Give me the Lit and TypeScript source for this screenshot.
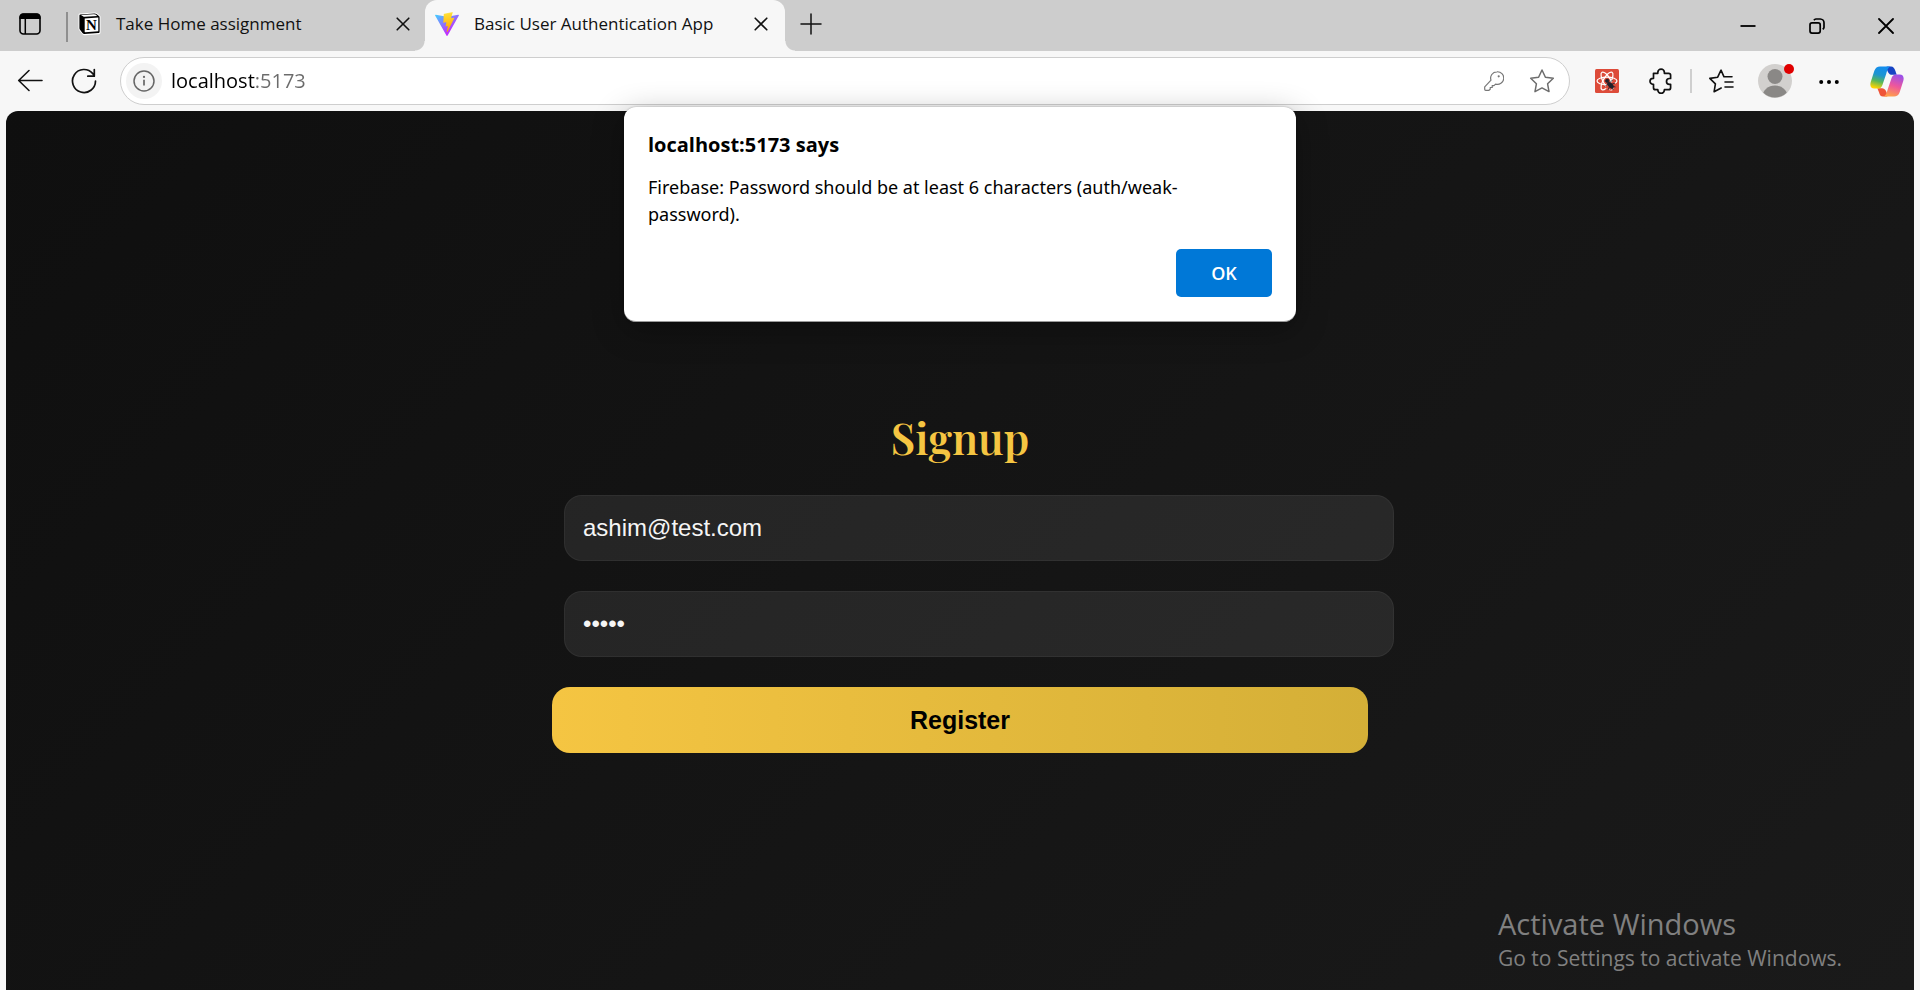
import { LitElement, html, css, svg } from "lit";
import { customElement, state } from "lit/decorators.js";

const closeIcon = svg`<svg width="14" height="14" viewBox="0 0 14 14" fill="none" stroke="#111" stroke-width="1.6" stroke-linecap="round"><path d="M1.2 1.2 12.8 12.8M12.8 1.2 1.2 12.8"/></svg>`;

@customElement("browser-tabs")
class BrowserTabs extends LitElement {
  static styles = css`
    :host { display: block; }
    .strip { display: flex; height: 51px; background: #cdcdcd; font: 18px/24px "Open Sans", "Noto Sans", sans-serif; color: #111; }
    button { border: 0; padding: 0; background: none; display: flex; align-items: center; justify-content: center; }
    .actions { width: 66px; padding-right: 6px; box-sizing: border-box; height: 48px; }
    .rule { width: 2px; height: 30px; margin-top: 12px; background: #8f8f8f; }
    .tab { display: flex; align-items: center; box-sizing: border-box; width: 357px; height: 51px; padding: 0 10px 3px 10px; gap: 15px; position: relative; }
    .tab.active { width: 360px; padding-right: 12px; background: #f7f7f7; border-radius: 12px 12px 0 0; }
    .tab.active::before, .tab.active::after { content: ""; position: absolute; bottom: 0; width: 10px; height: 10px; }
    .tab.active::before { right: 100%; background: radial-gradient(circle at 0 0, transparent 9px, #f7f7f7 10px); }
    .tab.active::after { left: 100%; background: radial-gradient(circle at 100% 0, transparent 9px, #f7f7f7 10px); }
    .title { flex: 1; white-space: nowrap; font-size: 17px; }
    .close { width: 24px; height: 24px; }
    .add { width: 52px; height: 48px; }
    .window { display: flex; margin-left: auto; }
    .window button { width: 69px; height: 51px; }
  `;
  render() {
    return html`
      <div class="strip">
        <button class="actions" aria-label="Tab actions">
          <svg width="22" height="22" viewBox="0 0 22 22"><rect x="1" y="1" width="20" height="20" rx="3.5" fill="none" stroke="#000" stroke-width="1.6"/><path d="M.5 6V4A3.6 3.6 0 0 1 4 .4h14A3.6 3.6 0 0 1 21.500 4v2z"/><path d="M6.300 6v15" stroke="#000" stroke-width="1.500"/></svg>
        </button>
        <div class="rule"></div>
        <div class="tab">
          <svg width="23" height="24" viewBox="0 0 23 24"><path d="M2 1.500 16.500.5c1.300 0 1.800.2 2.600.8l2.400 2c.8.600 1 1 1 2v14.700c0 1.500-.5 2.200-2 2.300l-13.500.9c-1.200.1-1.900-.2-2.500-1L1.500 18.500C.8 17.600.5 16.900.5 16V3c0-.9.500-1.500 1.500-1.500z" fill="#fff"/><path d="M2.400 2.500 16.200 1.500c1-.1 1.500.1 2.200.6l2.500 1.900c.5.400.7.700.7 1.400v14c0 1-.4 1.600-1.500 1.700L6.600 22c-.9.100-1.400-.1-1.900-.7L2 17.800c-.4-.6-.6-1-.6-1.700V3.600c0-.6.300-1 1-1.100z" fill="#000"/><path d="M3 3.100 15.800 2.200l1.700.4 1.700 1.300L6.600 4.800c-.8 0-1.100-.1-1.600-.5zM6.700 6.400 20.300 5.500v13.800L7.200 20.300l-.5-.4z" fill="#fff"/><text x="13.500" y="18.200" text-anchor="middle" font-family="Liberation Serif" font-weight="700" font-size="15">N</text></svg>
          <span class="title">Take Home assignment</span>
          <button class="close" aria-label="Close tab">${closeIcon}</button>
        </div>
        <div class="tab active">
          <svg width="24" height="24" viewBox="0 0 256 257"><defs><linearGradient id="v1" x1="0" x2=".58" y1="0" y2=".79"><stop offset="0" stop-color="#41d1ff"/><stop offset="1" stop-color="#bd34fe"/></linearGradient><linearGradient id="v2" x1=".43" x2=".5" y1=".02" y2=".89"><stop offset="0" stop-color="#ffea83"/><stop offset=".083" stop-color="#ffdd35"/><stop offset="1" stop-color="#ffa800"/></linearGradient></defs><path fill="url(#v1)" d="M255.153 37.938L134.897 252.976c-2.483 4.440-8.862 4.466-11.382.048L.875 37.958c-2.746-4.814 1.371-10.646 6.827-9.670l120.385 21.517a6.537 6.537 0 0 0 2.322-.004l117.867-21.483c5.438-.991 9.574 4.796 6.877 9.620Z"/><path fill="url(#v2)" d="M185.432.063L96.440 17.501a3.268 3.268 0 0 0-2.634 3.014l-5.474 92.456a3.268 3.268 0 0 0 3.997 3.378l24.777-5.718c2.318-.535 4.413 1.507 3.936 3.838l-7.361 36.047c-.495 2.426 1.782 4.500 4.151 3.780l15.304-4.649c2.372-.720 4.652 1.360 4.150 3.788l-11.698 56.621c-.732 3.542 3.979 5.473 5.943 2.437l1.313-2.028l72.516-144.720c1.215-2.423-.880-5.186-3.540-4.672l-25.505 4.922c-2.396.462-4.435-1.770-3.759-4.114l16.646-57.705c.677-2.350-1.370-4.583-3.769-4.113Z"/></svg>
          <span class="title">Basic User Authentication App</span>
          <button class="close" aria-label="Close tab">${closeIcon}</button>
        </div>
        <button class="add" aria-label="New tab"><svg width="22" height="22" viewBox="0 0 22 22" stroke="#111" stroke-width="1.500" stroke-linecap="round"><path d="M11 1v20M1 11h20"/></svg></button>
        <div class="window">
          <button aria-label="Minimize"><svg width="16" height="16" viewBox="0 0 16 16"><path d="M.5 8h15" stroke="#000" stroke-width="1.800"/></svg></button>
          <button aria-label="Restore"><svg width="16" height="16" viewBox="0 0 16 16" fill="none" stroke="#000" stroke-width="1.700"><rect x="1" y="4.900" width="10.200" height="10.200" rx="2"/><path d="M4.900 2.200A3 3 0 0 1 7 1h4.300A3.800 3.800 0 0 1 15 4.800V9.300a3 3 0 0 1-1.300 2"/></svg></button>
          <button aria-label="Close"><svg width="16" height="16" viewBox="0 0 16 16" stroke="#000" stroke-width="1.800" stroke-linecap="round"><path d="M1 1 15 15M15 1 1 15"/></svg></button>
        </div>
      </div>`;
  }
}

@customElement("browser-toolbar")
class BrowserToolbar extends LitElement {
  static styles = css`
    :host { display: block; }
    .bar { display: flex; align-items: center; height: 60px; padding: 0 6px 0 3px; background: #f7f7f7; }
    button { border: 0; padding: 0; background: none; display: flex; align-items: center; justify-content: center; width: 54px; height: 48px; flex: none; position: relative; }
    .address { flex: 1; display: flex; align-items: center; box-sizing: border-box; height: 48px; margin: 0 10px 0 9px; padding: 0 3px 0 5px; border: 1px solid #cecece; border-radius: 24px; background: #fff; }
    .address .info { width: 36px; height: 36px; border-radius: 50%; background: #f3f3f3; }
    .address .inline { width: 48px; }
    .url { flex: 1; min-width: 0; height: 36px; margin-left: 9px; padding: 0; border: 0; outline: 0; font: 20px/36px "Open Sans", "Noto Sans", sans-serif; color: transparent; background: linear-gradient(90deg, #000 84px, #6b6b6b 84px); -webkit-background-clip: text; background-clip: text; caret-color: #000; }
    .rule { width: 2px; height: 24px; margin: 0 2px; background: #cfcfcf; }
    .copilot { margin-left: 4px; }
    .dot { position: absolute; top: 7px; right: 8px; width: 10px; height: 10px; border-radius: 50%; background: #e00000; }
  `;
  render() {
    return html`
      <div class="bar">
        <button aria-label="Back"><svg width="26" height="24" viewBox="0 0 26 24" fill="none" stroke="#111" stroke-width="1.600" stroke-linecap="round" stroke-linejoin="round"><path d="M25 11.500H2M12 1.500 1.700 11.500 12 21.500"/></svg></button>
        <button aria-label="Refresh"><svg width="26" height="26" viewBox="0 0 26 26" fill="none" stroke="#111" stroke-width="1.700" stroke-linecap="round" stroke-linejoin="round"><path d="M24.500 13A11.500 11.500 0 1 1 21.800 5.600L23.300 7.500M23.300 1.500V8.200H16.800"/></svg></button>
        <div class="address">
          <button class="info" aria-label="Site information"><svg width="22" height="22" viewBox="0 0 22 22"><circle cx="11" cy="11" r="10" fill="none" stroke="#666" stroke-width="1.500"/><path d="M11 9.800v5.700" stroke="#666" stroke-width="1.700"/><circle cx="11" cy="6.900" r="1.100" fill="#666"/></svg></button>
          <input class="url" type="text" aria-label="Address" spellcheck="false" .value=${"localhost:5173"} />
          <button class="inline" aria-label="Passwords"><svg width="20" height="20" viewBox="0 0 20 20" fill="none" stroke="#777" stroke-width="1.200" stroke-linejoin="round"><path d="M12.900.800a6.300 6.300 0 1 1-1.300 12.300L10 14.600H8.200v1.900H6.200v1.700l-1.200 1.100H1.700C1.100 19.300.700 19 .700 18.300V15.800L7 9.200A6.300 6.300 0 0 1 12.900.800z"/><circle cx="14.700" cy="5.300" r="1.100" fill="#777" stroke="none"/></svg></button>
          <button class="inline" aria-label="Add to favorites"><svg width="26" height="26" viewBox="0 0 26 26" fill="none" stroke="#6d6d6d" stroke-width="1.500" stroke-linejoin="round"><path d="M13 2l3.400 7.200 7.900 1.100-5.700 5.500 1.400 7.800-7-3.700-7 3.700 1.400-7.800-5.700-5.500 7.900-1.100z"/></svg></button>
        </div>
        <button aria-label="React developer tools"><svg width="24" height="24" viewBox="0 0 24 24" fill="none"><rect width="24" height="24" rx="1.500" fill="#dd4b39"/><g stroke="#fff" stroke-width="1.200"><ellipse cx="12" cy="12" rx="10" ry="3.800"/><ellipse cx="12" cy="12" rx="10" ry="3.800" transform="rotate(60 12 12)"/><ellipse cx="12" cy="12" rx="10" ry="3.800" transform="rotate(-60 12 12)"/></g><path d="M18 13l3 3-5 5-6-2 3-5z" fill="#dd4b39"/><g fill="#20202a" stroke="#20202a" stroke-width=".8"><ellipse cx="15.500" cy="16.300" rx="3.600" ry="2" transform="rotate(45 15.500 16.300)"/><circle cx="12.200" cy="11.800" r="1.700"/><path d="M15 13.500 17.500 11M17 15l3-.8M12.500 15 10 17.500M14.500 17.500 13 21M17.500 18.500 18 21M18.500 17.500l2 .5"/></g></svg></button>
        <button aria-label="Extensions"><svg width="24" height="26" viewBox="0 0 24 26" fill="none" stroke="#111" stroke-width="1.700" stroke-linejoin="round"><path d="M4.500 5.300h4.300V4.500a3.300 3.300 0 0 1 6.600 0v.8h4.200a2 2 0 0 1 2 2V10.500h-1.200a2.900 2.900 0 0 0 0 5.800h1.200v3.400a2 2 0 0 1-2 2H15.400v.400a3.300 3.300 0 0 1-6.600 0v-.400H6.500a2 2 0 0 1-2-2V16.300H4a3 3 0 0 1 0-6h.5z"/></svg></button>
        <div class="rule"></div>
        <button aria-label="Favorites"><svg width="26" height="26" viewBox="0 0 26 26" fill="none" stroke="#111" stroke-width="1.600" stroke-linecap="round" stroke-linejoin="round"><path d="M24 8.800H16L13 2.200 9.700 9.200 1.800 10.400 7.400 15.900 6.100 23.800 13.200 20"/><path d="M17 14h8M17 19h8"/></svg></button>
        <button aria-label="Profile"><svg width="34" height="34" viewBox="0 0 34 34"><defs><clipPath id="av"><circle cx="17" cy="17" r="16.500"/></clipPath></defs><circle cx="17" cy="17" r="17" fill="#d2d0ce"/><circle cx="17" cy="12.500" r="7.500" fill="#8a8886"/><ellipse cx="17" cy="32.500" rx="12.500" ry="11" fill="#8a8886" clip-path="url(#av)"/></svg><span class="dot"></span></button>
        <button aria-label="Settings and more"><svg width="20" height="6" viewBox="0 0 20 6"><circle cx="2.200" cy="4" r="2"/><circle cx="10" cy="4" r="2"/><circle cx="17.800" cy="4" r="2"/></svg></button>
        <button class="copilot" aria-label="Copilot"><svg width="34" height="31" viewBox="0 0 102 92"><defs><linearGradient id="c1" x1=".6" y1="0" x2=".35" y2="1"><stop offset="0" stop-color="#128df0"/><stop offset=".4" stop-color="#1f95cf"/><stop offset=".68" stop-color="#57b65a"/><stop offset="1" stop-color="#ffd400"/></linearGradient><linearGradient id="c2" x1=".65" y1="0" x2=".35" y2="1"><stop offset="0" stop-color="#9b50e8"/><stop offset=".5" stop-color="#ee579c"/><stop offset="1" stop-color="#ffa04a"/></linearGradient></defs><path d="M50 1H63C70 1 73 6 76 14L80 26H66C56 26 50 14 50 1z" fill="#1643c4"/><path d="M52 91H39C32 91 29 86 27 78L22 66H36C46 66 52 78 52 91z" fill="#ef5438"/><path d="M30 1H62C54 3 52 12 49 22L37 57C35 63 31 67 24 67H13C3 67-1 59 2 48L13 14C16 5 22 1 30 1z" fill="url(#c1)"/><path d="M72 91H40C48 89 50 80 53 70L65 35C67 29 71 25 78 25H89C99 25 103 33 100 44L89 78C86 87 80 91 72 91z" fill="url(#c2)"/></svg></button>
      </div>`;
  }
}

@customElement("alert-dialog")
class AlertDialog extends LitElement {
  static styles = css`
    :host { display: block; }
    .box { box-sizing: border-box; padding: 24px; background: #fff; border-radius: 12px; border-bottom: 1px solid #9a9a9a; box-shadow: 0 8px 32px rgba(0, 0, 0, 0.3), 0 0 2px rgba(0, 0, 0, 0.3); font-family: "Noto Sans", "Open Sans", sans-serif; color: #000; }
    h2 { margin: 0 0 15px; font: 700 20px/28px "Open Sans", "Noto Sans", sans-serif; }
    p { margin: 0 0 21px; padding-right: 48px; font-size: 18px; line-height: 27px; }
    .row { display: flex; justify-content: flex-end; }
    button { width: 96px; height: 48px; border: 0; border-radius: 5px; background: #0078d7; color: #fff; font: 600 18px/24px "Open Sans", "Noto Sans", sans-serif; }
  `;
  render() {
    return html`
      <div class="box" role="alertdialog" aria-labelledby="t" aria-describedby="m">
        <h2 id="t">localhost:5173 says</h2>
        <p id="m">Firebase: Password should be at least 6 characters (auth/weak-password).</p>
        <div class="row"><button>OK</button></div>
      </div>`;
  }
}

@customElement("signup-form")
class SignupForm extends LitElement {
  static styles = css`
    :host { display: block; }
    form { display: flex; flex-direction: column; width: 100%; max-width: 816px; margin: 0 auto; }
    h1 { margin: 0 0 29px; text-align: center; font: 600 43px/58px "Playfair Display", "Liberation Serif", serif; color: #f5c542; }
    input, button { box-sizing: border-box; height: 66px; border-radius: 18px; font-family: "Liberation Sans", Arial, sans-serif; }
    input { width: calc(100% + 14px); margin: 0 0 30px 12px; padding: 0 18px; border: 1px solid rgba(255, 255, 255, 0.05); background: rgba(255, 255, 255, 0.08); color: #f5f5f5; font-size: 24px; outline: 0; }
    button { border: 0; background: linear-gradient(90deg, #f5c542, #d4af37); color: #000; font-size: 25px; font-weight: 700; }
  `;
  @state() email = "ashim@test.com";
  @state() password = "12345";
  render() {
    return html`
      <form @submit=${(e: Event) => e.preventDefault()}>
        <h1>Signup</h1>
        <input type="email" aria-label="Email" .value=${this.email} />
        <input type="password" aria-label="Password" .value=${this.password} />
        <button type="submit">Register</button>
      </form>`;
  }
}

@customElement("app-root")
class AppRoot extends LitElement {
  static styles = css`
    :host { display: flex; flex-direction: column; min-height: 100vh; background: #f7f7f7; position: relative; overflow: hidden; }
    main { flex: 1; margin: 0 6px; padding: 297px 24px 48px; border-radius: 12px 12px 0 0; background: linear-gradient(135deg, #0f0f0f, #1a1a1a); }
    .alert { position: absolute; top: 107px; left: 50%; width: 672px; transform: translateX(-50%); }
    .watermark { position: absolute; right: 79px; bottom: 17px; width: 343px; font-family: "Open Sans", "Noto Sans", sans-serif; color: #808080; white-space: nowrap; }
    .watermark strong { display: block; font-weight: 400; font-size: 29px; line-height: 38px; }
    .watermark span { display: block; font-size: 21px; line-height: 30px; }
  `;
  render() {
    return html`
      <browser-tabs></browser-tabs>
      <browser-toolbar></browser-toolbar>
      <main><signup-form></signup-form></main>
      <alert-dialog class="alert"></alert-dialog>
      <div class="watermark"><strong>Activate Windows</strong><span>Go to Settings to activate Windows.</span></div>`;
  }
}
